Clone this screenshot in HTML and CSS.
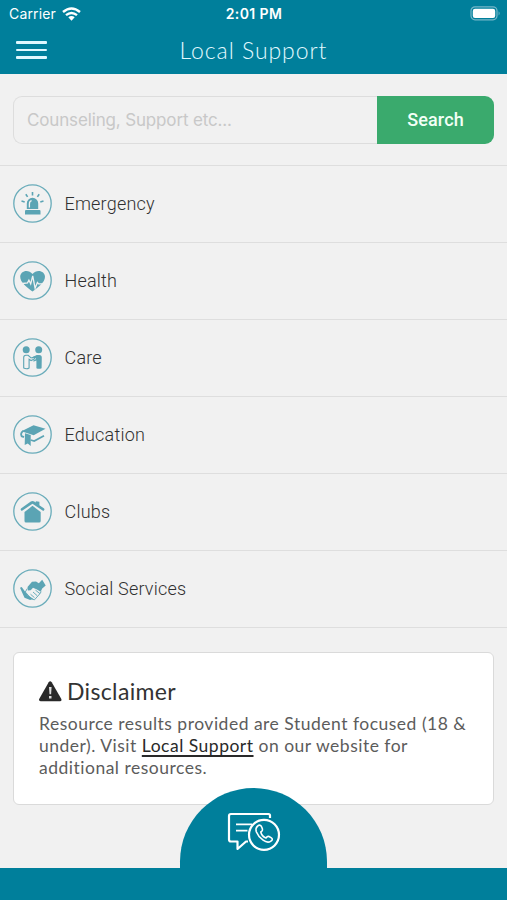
FILE: index.html
```html
<!DOCTYPE html>
<html lang="en">
<head>
<meta charset="utf-8">
<title>Local Support</title>
<link rel="stylesheet" href="styles.css">
</head>
<body>
<header class="top">
  <div class="status">
    <div class="carrier"><span class="carrier-name">Carrier</span>
      <svg width="19" height="14" viewBox="0 0 19 14" fill="none" stroke="#fff" stroke-width="2.4"><path d="M1 5Q9.500-2.200 18 5M4 8.200Q9.500 3.600 15 8.200"/><path d="M6.300 10.300Q9.500 7.700 12.700 10.300L9.500 13.700Z" fill="#fff" stroke="none"/></svg>
    </div>
    <span class="time">2:01 PM</span>
    <svg class="battery" width="31" height="15" viewBox="0 0 31 15"><rect x="1" y=".8" width="26" height="13" rx="4" fill="none" stroke="#75b7c9" stroke-width="1.2"/><rect x="2.800" y="2.700" width="22.400" height="9.200" rx="2.200" fill="#fff"/><path d="M28.600 5.200q2 2.100 0 4.200z" fill="#75b7c9"/></svg>
  </div>
  <div class="nav">
    <div class="menu"><i></i><i></i><i></i></div>
    <h1><span>Local Support</span></h1>
  </div>
</header>
<main>
  <div class="search"><div class="field"><span>Counseling, Support etc...</span></div><div class="button"><span>Search</span></div></div>
  <ul class="list">
    <li><svg class="icon" viewBox="0 0 39 39"><circle class="ring" cx="19.500" cy="19.500" r="18.700"/><path d="M13.800 25V19.500a5.700 5.700 0 0 1 11.400 0V25zM13 26h13.500q1 0 1 1v3.500H12V27q0-1 1-1z"/><path class="cut" d="M16.400 23.500V20q0-2.800 2.200-3.300"/><path class="line" stroke-width="1.600" d="M19.500 8v3.500M12.800 10.200l1.800 2.700M26.200 10.200l-1.800 2.700M8.500 17l3.200 1M30.500 17l-3.200 1"/></svg><span>Emergency</span></li>
    <li><svg class="icon" viewBox="0 0 39 39"><circle class="ring" cx="19.500" cy="19.500" r="18.700"/><path d="M19.500 30.500C14 26.500 7.200 21.500 7.200 15.800 7.200 9.500 15.500 7.700 19.500 13 23.500 7.700 32 9.500 32 15.800c0 5.700-7 10.700-12.500 14.700z"/><path class="cut" d="M9.500 22.500l5-.7 1.400-2.600 1.800 3.600 2-8 2.400 12.400 2.300-5.800 1.200 1.400h4"/></svg><span>Health</span></li>
    <li><svg class="icon" viewBox="0 0 39 39"><circle class="ring" cx="19.500" cy="19.500" r="18.700"/><circle cx="13.200" cy="11.700" r="3.500"/><circle cx="25.700" cy="11.700" r="3.500"/><path class="line" stroke-width="1.100" d="M10.700 30V19.500q0-2.200 2.200-2.200h2.200l3 2.700 3.300-1v2l-3.300 1.500-2-1.300V30q-2.500 1.500-5.400 0z"/><path d="M28.600 30.200q-2.800 1.300-5.200 0v-7.700l-2.500 1.100-1.200-.7 3.300-2-1-1.200-2.800.8v-1.300l4.500-2.200h2.600q2.500 0 2.500 2.500z"/></svg><span>Care</span></li>
    <li><svg class="icon" viewBox="0 0 39 39"><circle class="ring" cx="19.500" cy="19.500" r="18.700"/><path d="M8.500 16.300L20.500 10.200l12 3.500-11.800 6.500z"/><path class="line" stroke-width="1.800" d="M10.500 15.700Q7 18 8.600 21.200l2.400.9M31 20.800L21.200 26l-3.600-1"/><path d="M12 18.200l5.700 1.900V31l-2.900-2.600L11.700 30z"/></svg><span>Education</span></li>
    <li><svg class="icon" viewBox="0 0 39 39"><circle class="ring" cx="19.500" cy="19.500" r="18.700"/><path d="M19.500 13.800l8.200 6.300V29q0 1.500-1.500 1.500H13q-1.500 0-1.500-1.500v-8.900z"/><path d="M8.100 18.300q-1-1 .2-2L17.800 9.600q1.700-1.200 3.400 0l1.600 1V9.200l3.600.5v3.500l4.400 3.100q1.200 1 .2 2l-.7.7-10.800-7.200L8.700 19z"/></svg><span>Clubs</span></li>
    <li><svg class="icon" viewBox="0 0 39 39"><circle class="ring" cx="19.500" cy="19.500" r="18.700"/><path d="M14.500 18l4.500-5.300 4-.1 2.800 1.600 3.400-3.500 3.500 5.700-3.500 3-1.500 3.400-4.200-2.600-3.500-1.500-2.300 2.500-2.800.2zM7 18.700l1.700-.7 6 8.300 5.500 3.500-3 1.300-5.700-2.300z"/><path class="line" stroke-width=".9" d="M14.300 19.500l-2 3.500 6.200 7 3 .8 5.500-6.200 1.200-2M17.500 25.200l4 3.500M20 23l4.200 3.700M22.500 21.200l4.500 3.500"/></svg><span>Social Services</span></li>
  </ul>
  <section class="card">
    <h2><svg width="23" height="21" viewBox="0 0 23 21"><path fill="#292929" d="M9.700 1.300q1.500-2.100 3 0l9.500 16.500q1 2.300-1.300 2.500H1.600Q-.700 20.100.300 17.800z"/><path fill="#ddd" d="M10 6h2.600l-.5 7.200h-1.600zM10 15h2.500v2.500H10z"/></svg><span class="heading">Disclaimer</span></h2>
    <p><span>Resource results provided are Student focused (18 &amp;</span><br><span>under). Visit <a>Local Support</a> on our website for</span><br><span>additional resources.</span></p>
  </section>
</main>
<footer>
  <div class="bubble"><svg width="54" height="40" viewBox="0 0 54 40" fill="none" stroke="#fff" stroke-width="2.200" stroke-linejoin="round"><path d="M43 6V3.500Q43 2 41.500 2H4Q2 2 2 4v23.500q0 2 2 2h6.500V37l8.500-7.500h2"/><path stroke-width="1.700" d="M9 12.300h16M9 18.600h11.500"/><circle cx="37" cy="22.800" r="15"/><path stroke-width="1.600" d="M30.500 14.200q3-2.500 4.300 1l.7 2q.4 1.500-1.700 2.800.8 4.200 5.200 6 1.500-2.200 3-1.500l2.400 1.400q2.200 1.600-.8 3.500-3.200 2-7.500-1.200-4.800-3.500-6.800-8.500-1-3.500 1.200-5.500z"/></svg></div>
  <div class="bar"></div>
</footer>
</body>
</html>
```
FILE: styles.css
```css
* { box-sizing: border-box; }
body { margin: 0; height: 900px; overflow: hidden; position: relative; background: #f1f1f1; font-family: Roboto, sans-serif; color: #303030; }
span { white-space: nowrap; }
.top { height: 74px; background: #007f9b; color: #fff; }
.status { height: 27px; display: grid; grid-template-columns: 1fr auto 1fr; align-items: center; padding: 0 6px 0 9px; font-family: Inter, sans-serif; }
.carrier { display: flex; align-items: center; gap: 6px; font-size: 14px; letter-spacing: .15px; }
.time { font-size: 14px; font-weight: 600; letter-spacing: .4px; margin-right: 2px; }
.battery { justify-self: end; }
.nav { height: 46px; display: grid; grid-template-columns: 31px 1fr 31px; align-items: center; padding: 0 16px; }
.menu { display: flex; flex-direction: column; gap: 5px; }
.menu i { height: 2.500px; background: #dff8ff; border-radius: 1px; }
h1 { margin: 0 0 1px; text-align: center; font: 300 23px/26px Lato, sans-serif; letter-spacing: .95px; color: #e3faff; }
.search { margin: 22px 13px 21px; height: 48px; display: flex; }
.field { flex: 1; border: 1px solid #ddd; border-right: 0; border-radius: 9px 0 0 9px; display: flex; align-items: center; padding-left: 13px; font: 17px Inter, sans-serif; letter-spacing: -.15px; color: #c8c8c8; }
.button { width: 117px; background: #3aaa6d; color: #f2fff6; border-radius: 0 9px 9px 0; display: flex; align-items: center; justify-content: center; padding-bottom: 2px; font-size: 18px; font-weight: 500; letter-spacing: .15px; }
.list { list-style: none; margin: 0; padding: 0; border-top: 1px solid #dedede; }
.list li { height: 77px; border-bottom: 1px solid #dedede; display: flex; align-items: center; padding: 0 0 2px 13px; gap: 12.500px; font-size: 18px; font-weight: 300; letter-spacing: .2px; }
.icon { width: 39px; height: 39px; fill: #5ba4b4; }
.ring { fill: none; stroke: #69acba; stroke-width: 1.300; }
.line { fill: none; stroke: #5ba4b4; }
.cut { fill: none; stroke: #f1f1f1; stroke-width: 1.300; }
.card { margin: 24px 13px 0; height: 153px; border: 1px solid #dadada; border-radius: 6px; background: #fff; padding: 25px; font-family: Lato, sans-serif; }
h2 { margin: 0; height: 26px; display: flex; align-items: center; gap: 5px; font-size: 23px; font-weight: 400; color: #333; letter-spacing: .35px; }
p { margin: 9px 0 0; font-size: 17.500px; line-height: 22px; letter-spacing: .5px; color: #5c5c5c; }
p a { color: #292929; text-decoration: underline; text-underline-offset: 3px; text-decoration-thickness: 1.500px; }
footer { position: absolute; left: 0; right: 0; bottom: 0; height: 112px; display: flex; flex-direction: column; align-items: center; }
.bubble { width: 147px; height: 80px; overflow: hidden; background: #007f9b; border-radius: 73.500px 73.500px 0 0; display: flex; justify-content: center; padding-top: 24px; }
.bar { width: 100%; height: 32px; background: #007f9b; }
```
